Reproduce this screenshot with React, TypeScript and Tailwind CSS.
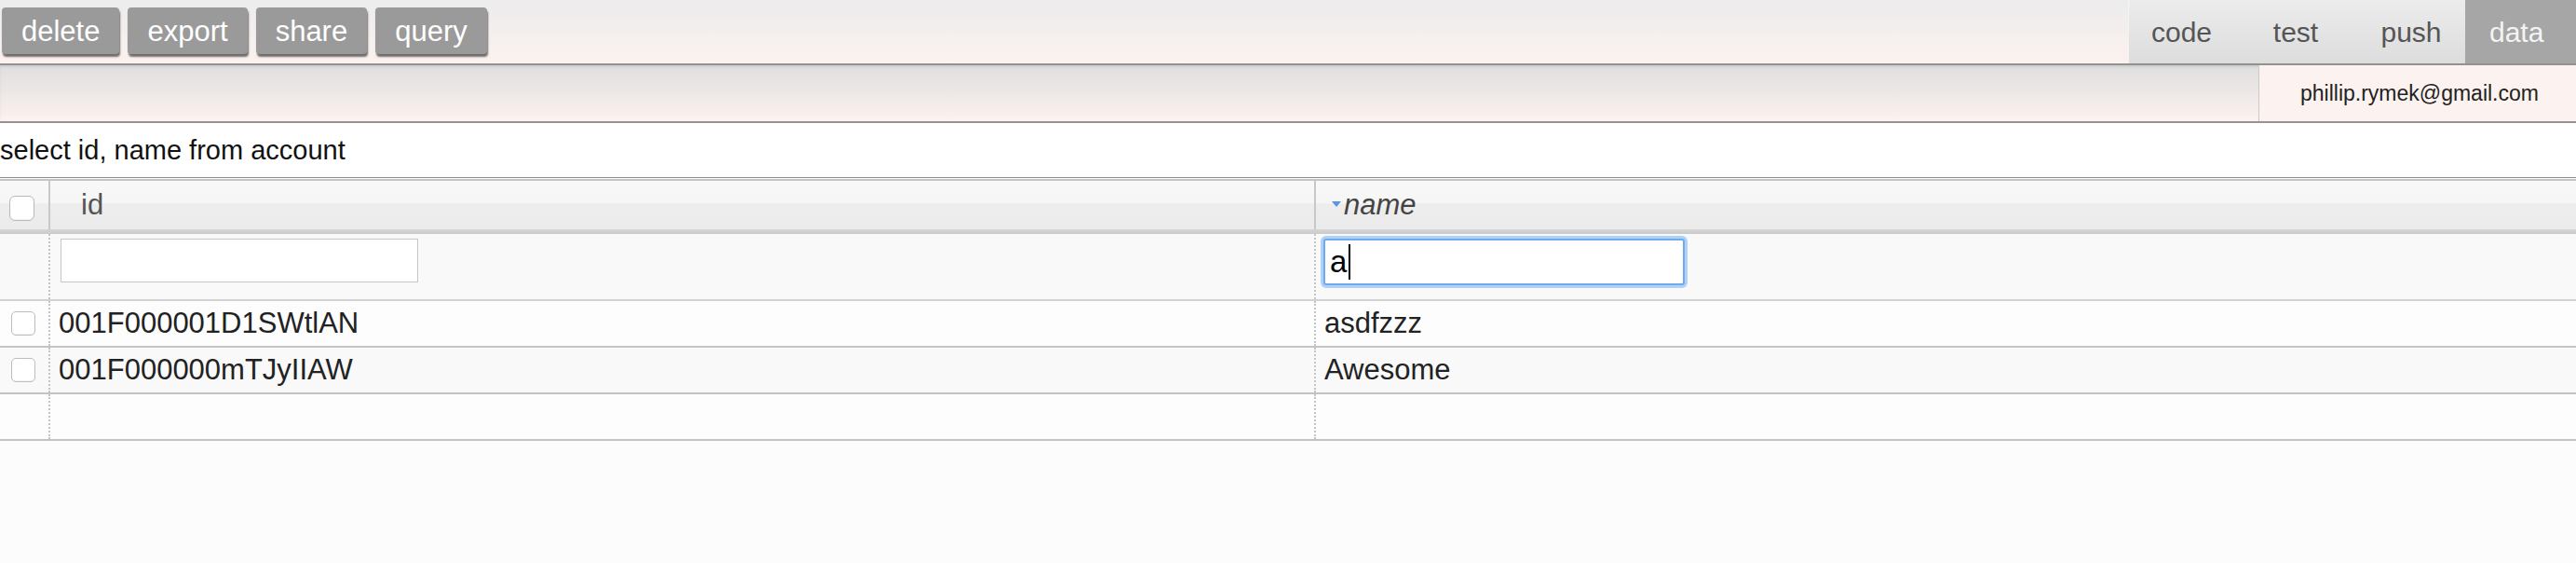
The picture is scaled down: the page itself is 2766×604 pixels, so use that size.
const font = { fontFamily: '"Liberation Sans", Arial, sans-serif' }

const buttons = ["delete", "export", "share", "query"]

const rows = [
  { id: "001F000001D1SWtlAN", name: "asdfzzz", bg: "bg-[#fdfdfd]" },
  { id: "001F000000mTJyIIAW", name: "Awesome", bg: "bg-[#f9f9f9]" },
]

function Checkbox({ big }: { big?: boolean }) {
  return (
    <span
      className={
        big
          ? "block h-[27px] w-[27px] rounded-[6px] border border-[#b9b9b9] bg-white shadow-[inset_0_-1px_1px_rgba(0,0,0,0.06)]"
          : "block h-[26px] w-[26px] rounded-[5px] border border-[#bdbdbd] bg-white shadow-[inset_0_-1px_1px_rgba(0,0,0,0.06)]"
      }
    />
  )
}

export default function App() {
  return (
    <div style={font} className="min-h-[604px] w-full bg-[#fcfcfc] text-[#222]">
      {/* toolbar */}
      <div className="flex h-[70px] border-b-2 border-[#929292] bg-gradient-to-b from-[#ececec] to-[#fcf2ef]">
        <div className="flex gap-[9px] pl-[2px] pt-[8px]">
          {buttons.map((b) => (
            <button
              key={b}
              className="h-[50px] rounded-[4px] bg-[#9a9a9a] px-[21px] text-[31px] leading-none text-white shadow-[1px_3px_2px_rgba(0,0,0,0.55)]"
            >
              {b}
            </button>
          ))}
        </div>
        <div className="ml-auto flex h-[68px] text-[30px] text-[#555]">
          <div className="flex w-[114px] items-center justify-center border-l border-[#f4f4f4] bg-gradient-to-b from-[#ececec] to-[#dddddd]">
            code
          </div>
          <div className="flex w-[132px] items-center justify-center bg-gradient-to-b from-[#ececec] to-[#dddddd]">
            test
          </div>
          <div className="flex w-[116px] items-center justify-center bg-gradient-to-b from-[#ececec] to-[#dddddd]">
            push
          </div>
          <div className="flex w-[119px] items-center bg-[#a6a6a6] pl-[26px] text-[#f4f4f4]">data</div>
        </div>
      </div>

      {/* user bar */}
      <div className="flex h-[62px] border-b-2 border-[#949494] bg-gradient-to-b from-[#dfdedf] to-[#fcf2ef] shadow-[inset_0_2px_2px_rgba(0,0,0,0.08)]">
        <div className="ml-auto flex w-[341px] items-center border-l border-[#c9c9c9] bg-[#fcf2ef] pl-[44px] text-[23px] text-[#222]">
          phillip.rymek@gmail.com
        </div>
      </div>

      {/* query */}
      <div className="flex h-[58px] items-center bg-white pt-[2px] text-[29px] text-[#111]">select id, name from account</div>

      {/* table */}
      <div className="border-t border-[#8f8f8f] pt-px">
        <div className="border-t-2 border-[#c4c4c4]">
          {/* header */}
          <div className="flex h-[52px] bg-[linear-gradient(to_bottom,#f8f8f8_0%,#f6f6f6_45%,#ededee_48%,#ebebec_100%)] text-[31px]">
            <div className="flex w-[52px] shrink-0 items-center pl-[10px] pt-[6px]">
              <Checkbox big />
            </div>
            <div className="flex w-[1359px] shrink-0 items-center border-l-2 border-[#c8c8c8] pl-[33px] text-[#555]">
              id
            </div>
            <div className="flex flex-1 items-center border-l-2 border-[#c8c8c8] pl-[17px] italic text-[#444]">
              <svg width="10" height="6" viewBox="0 0 10 6" className="mr-[3px] mt-[-3px]">
                <polygon points="0,0 10,0 5,6" fill="#5797e0" />
              </svg>
              name
            </div>
          </div>
          <div className="h-[5px] bg-gradient-to-b from-[#d6d6d6] to-[#c9c9c9]" />

          {/* filter row */}
          <div className="flex h-[72px] border-b-2 border-[#d2d2d2] bg-[#f9f9f9]">
            <div className="w-[52px] shrink-0" />
            <div className="w-[1359px] shrink-0 border-l-2 border-dotted border-[#c4c4c4] pl-[11px] pt-[5px]">
              <div className="h-[47px] w-[384px] border border-[#c6c6c6] bg-white" />
            </div>
            <div className="flex-1 border-l-2 border-dotted border-[#c4c4c4] pl-[8px] pt-[5px]">
              <div className="flex h-[50px] w-[388px] items-center rounded-[3px] border-2 border-[#6fa9ef] bg-white pl-[5px] text-[33px] text-black ring-[3px] ring-[#b0d0f6]">
                a<span className="ml-[2px] h-[38px] w-[2px] bg-black" />
              </div>
            </div>
          </div>

          {rows.map((r) => (
            <div key={r.id} className={`flex h-[50px] border-b-2 border-[#c3c3c3] text-[31px] ${r.bg}`}>
              <div className="flex w-[52px] shrink-0 items-center pl-[12px]">
                <Checkbox />
              </div>
              <div className="flex w-[1359px] shrink-0 items-center border-l-2 border-dotted border-[#c4c4c4] pl-[9px]">
                {r.id}
              </div>
              <div className="flex flex-1 items-center border-l-2 border-dotted border-[#c4c4c4] pl-[9px]">
                {r.name}
              </div>
            </div>
          ))}

          <div className="flex h-[50px] border-b-2 border-[#c3c3c3] bg-[#fdfdfd]">
            <div className="w-[52px] shrink-0" />
            <div className="w-[1359px] shrink-0 border-l-2 border-dotted border-[#c4c4c4]" />
            <div className="flex-1 border-l-2 border-dotted border-[#c4c4c4]" />
          </div>
        </div>
      </div>
    </div>
  )
}
